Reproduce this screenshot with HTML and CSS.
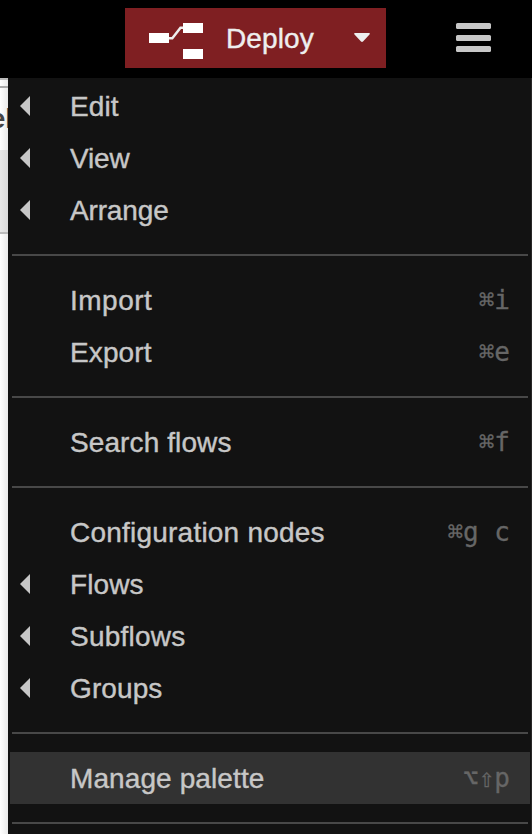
FILE: index.html
```html
<!DOCTYPE html>
<html lang="en">
<head>
<meta charset="utf-8">
<title>Node-RED</title>
<link rel="stylesheet" href="styles.css">
</head>
<body>
<header class="header">
  <div class="deploy">
    <svg class="deploy-icon" width="54" height="36" viewBox="0 0 54 36">
      <path d="M19 15.300h4.300L31.500 4.800h4" fill="none" stroke="#eee" stroke-width="2.500"/>
      <path d="M0 10h20v10H0zM34 0h20v10H34zM34 26h20v10H34z" fill="#fff"/>
    </svg>
    <span class="deploy-label">Deploy</span>
    <svg class="caret" width="16" height="10" viewBox="0 0 16 10"><path d="M1 0h14q1.500.5.5 1.500L9 8.600q-1 .8-2 0L.5 1.500Q-.5.500 1 0z" fill="#eee"/></svg>
  </div>
  <div class="burger"><i></i><i></i><i></i></div>
</header>
<main class="main">
  <div class="workspace">
    <div class="panel-top"></div>
    <div class="tab"><span>el</span></div>
    <div class="toolbar"></div>
  </div>
  <nav class="menu">
    <div class="item sub"><span class="label">Edit</span></div>
    <div class="item sub"><span class="label tight">View</span></div>
    <div class="item sub"><span class="label tight">Arrange</span></div>
    <hr>
    <div class="item"><span class="label wide">Import</span><kbd>⌘i</kbd></div>
    <div class="item"><span class="label">Export</span><kbd>⌘e</kbd></div>
    <hr>
    <div class="item"><span class="label">Search flows</span><kbd>⌘f</kbd></div>
    <hr>
    <div class="item"><span class="label loose">Configuration nodes</span><kbd>⌘g c</kbd></div>
    <div class="item sub"><span class="label">Flows</span></div>
    <div class="item sub"><span class="label loose">Subflows</span></div>
    <div class="item sub"><span class="label">Groups</span></div>
    <hr>
    <div class="item active"><span class="label">Manage palette</span><kbd>⌥⇧p</kbd></div>
    <hr>
  </nav>
</main>
</body>
</html>
```
FILE: styles.css
```css
* { box-sizing: border-box; }
body {
  margin: 0;
  height: 834px;
  overflow: hidden;
  background: #000;
  font: 28px/52px "Liberation Sans", Arial, sans-serif;
  color: #c7c7c7;
}
.header {
  height: 78px;
  padding: 8px 41px 0 125px;
  display: flex;
  justify-content: space-between;
}
.deploy {
  width: 261px;
  height: 60px;
  padding: 0 16px 0 24px;
  display: flex;
  align-items: center;
  background: #7f1f22;
  color: #eee;
}
.deploy-icon { margin-top: -7px; margin-bottom: -12px; }
.deploy-label {
  margin-left: 23px;
  padding-top: 2px;
  line-height: 60px;
  letter-spacing: .1px;
  -webkit-text-stroke: .4px;
}
.caret { margin-left: auto; }
.burger {
  width: 35px;
  padding-top: 15px;
  display: flex;
  flex-direction: column;
  gap: 5.6px;
}
.burger i { height: 6px; border-radius: 1.5px; background: #c7c7c7; }
.main { display: flex; height: 756px; }
.workspace {
  width: 8px;
  overflow: hidden;
  background: linear-gradient(90deg, #fff, #eaeaea);
}
.panel-top { height: 10px; border-top: 2px solid #bbb; border-bottom: 2px solid #aaa; }
.tab {
  height: 62px;
  display: flex;
  justify-content: flex-end;
  color: #444;
  font-weight: bold;
  line-height: 62px;
}
.tab span { margin-right: -5px; }
.toolbar {
  height: 84px;
  background: linear-gradient(90deg, #e8e8e8, #dadada);
  border-bottom: 2px solid #bbb;
}
.menu {
  width: 524px;
  padding: 2px 1px 2px 2px;
  background: #121212;
  border-right: 1px solid #292827;
}
.item {
  height: 52px;
  padding: 0 20px 0 60px;
  display: flex;
  justify-content: space-between;
  position: relative;
}
.item.active { background: #323232; }
.label {
  padding-top: 1px;
  letter-spacing: .1px;
  -webkit-text-stroke: .4px;
}
.label.tight { letter-spacing: -.15px; }
.label.loose { letter-spacing: .22px; }
.label.wide { letter-spacing: .5px; }
.sub::before {
  content: "";
  position: absolute;
  left: 10px;
  top: 16px;
  border: solid transparent;
  border-width: 10px 10px 10px 0;
  border-right-color: #c7c7c7;
}
kbd {
  font: 26px/52px "DejaVu Sans Mono", monospace;
  color: #666;
  white-space: pre;
  -webkit-text-stroke: .3px;
}
hr { height: 2px; margin: 18px 2px; border: 0; background: #484848; }
```
